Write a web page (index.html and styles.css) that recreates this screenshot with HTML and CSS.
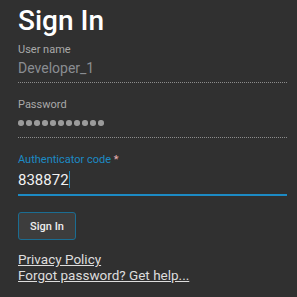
FILE: index.html
```html
<!DOCTYPE html>
<html lang="en">
<head>
  <meta charset="UTF-8"/>
  <meta name="viewport" content="width=device-width, initial-scale=1.0"/>
  <title>Sign In</title>
  <link rel="stylesheet" href="styles.css">
</head>
<body>
  <div class="signin">
    <h1>Sign In</h1>
    <div class="field">
      <div class="label">User name</div>
      <div class="value muted">Developer_1</div>
    </div>
    <div class="field">
      <div class="label">Password</div>
      <div class="value dots" aria-label="password">
        <i></i><i></i><i></i><i></i><i></i><i></i><i></i><i></i><i></i><i></i><i></i>
      </div>
    </div>
    <div class="field active">
      <div class="label">Authenticator code <span class="req">*</span></div>
      <div class="value">838872<span class="caret"></span></div>
    </div>
    <button class="btn">Sign In</button>
    <div class="links">
      <a href="#">Privacy Policy</a>
      <a href="#">Forgot password? Get help...</a>
    </div>
  </div>
</body>
</html>
```

FILE: styles.css
```css
:root {
  --bg: #303030;
  --text: #ffffff;
  --label: #a9a9a9;
  --muted: #8a8d92;
  --accent: #1c8ac4;
}

*, *::before, *::after { box-sizing: border-box; }

body {
  margin: 0;
  background: var(--bg);
  color: var(--text);
  font-family: Roboto, "Liberation Sans", sans-serif;
  height: 100vh;
}

.signin {
  padding: 5px 10px 0 18px;
}

h1 {
  margin: 0 0 6px;
  font-size: 28px;
  line-height: 32px;
  font-weight: 500;
}

.field {
  border-bottom: 1px dotted #8c8c8c;
  padding-bottom: 4px;
  margin-bottom: 15px;
}

.label {
  font-size: 11px;
  line-height: 14px;
  color: var(--label);
}

.value {
  margin-top: 1px;
  font-size: 14px;
  line-height: 20px;
}

.value.muted { color: var(--muted); }

.value.dots {
  display: flex;
  align-items: center;
  gap: 2.5px;
  height: 20px;
}
.value.dots i {
  width: 5.5px;
  height: 5.5px;
  border-radius: 50%;
  background: #9b9b9b;
}

.field.active {
  border-bottom: 2px solid var(--accent);
  margin-bottom: 16px;
}
.field.active .label { color: var(--accent); }
.field.active .value {
  font-size: 15px;
  margin-top: 3px;
  color: #f2f2f2;
}

.req { color: #e9b4b4; }

.caret {
  display: inline-block;
  width: 1px;
  height: 17px;
  background: var(--accent);
  vertical-align: -3px;
}

.btn {
  display: block;
  width: 58px;
  height: 28px;
  padding: 0;
  font: 500 11px Roboto, "Liberation Sans", sans-serif;
  color: #eeeeee;
  background: #3d3d3d;
  border: 1px solid #1b6d92;
  border-radius: 3px;
}

.links {
  margin-top: 11px;
  display: flex;
  flex-direction: column;
  align-items: flex-start;
}

.links a {
  color: #dddddd;
  font-size: 13.5px;
  line-height: 16px;
}
```
